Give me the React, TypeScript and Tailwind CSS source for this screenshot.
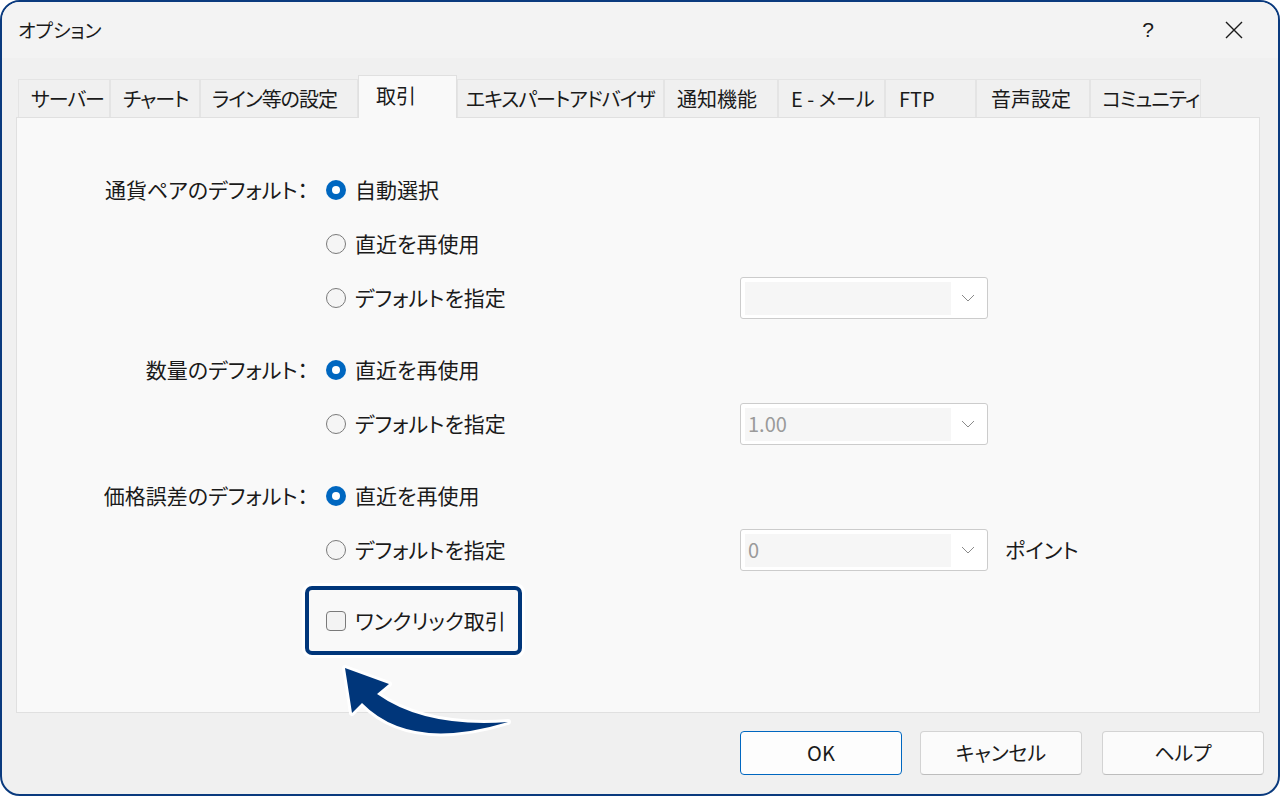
import React from "react";

const font = {
  fontFamily: '"Noto Sans CJK JP", "Noto Sans", sans-serif',
  fontFeatureSettings: '"palt"',
};

const tabs: { label: string; w: number; pl: number; tight?: boolean }[] = [
  { label: "サーバー", w: 92, pl: 12, tight: true },
  { label: "チャート", w: 90, pl: 12, tight: true },
  { label: "ライン等の設定", w: 158, pl: 11, tight: true },
  { label: "取引", w: 99, pl: 17 },
  { label: "エキスパートアドバイザ", w: 207, pl: 8, tight: true },
  { label: "通知機能", w: 114, pl: 12 },
  { label: "E - メール", w: 107, pl: 12 },
  { label: "FTP", w: 91, pl: 13 },
  { label: "音声設定", w: 114, pl: 14 },
  { label: "コミュニティ", w: 111, pl: 11, tight: true },
];

function Radio({ checked }: { checked?: boolean }) {
  if (checked) {
    return (
      <span className="flex h-[20px] w-[20px] shrink-0 items-center justify-center rounded-full bg-[#0067c0]">
        <span className="h-[8px] w-[8px] rounded-full bg-white" />
      </span>
    );
  }
  return <span className="h-[20px] w-[20px] shrink-0 rounded-full border-[1.5px] border-[#7a7a7a] bg-[#f5f5f5]" />;
}

function Dropdown({ value }: { value?: string }) {
  return (
    <div className="flex h-[42px] w-[248px] items-center rounded-[3px] border border-[#cccccc] bg-white pl-[4px] pr-[10px]">
      <div className="flex h-[33px] w-[206px] items-center bg-[#f6f6f6] pl-[3px] text-[20px] text-[#9a9a9a]">
        {value}
      </div>
      <div className="flex flex-1 justify-center pl-[8px]">
        <svg width="14" height="8" viewBox="0 0 14 8">
          <path d="M1 1 L7 7 L13 1" fill="none" stroke="#8a8a8a" strokeWidth="1" />
        </svg>
      </div>
    </div>
  );
}

function Row({
  label,
  checked,
  text,
  dropdown,
  suffix,
}: {
  label?: string;
  checked?: boolean;
  text: string;
  dropdown?: string | null;
  suffix?: string;
}) {
  return (
    <div className="flex h-[54px] items-center">
      <div className="w-[295px] whitespace-nowrap pr-[4px] text-right text-[21px] text-[#1a1a1a]">{label}</div>
      <div className="ml-[14px] flex w-[414px] items-center gap-[9px] text-[21px] text-[#1a1a1a]">
        <Radio checked={checked} />
        <span>{text}</span>
      </div>
      {dropdown !== undefined && dropdown !== null ? <Dropdown value={dropdown} /> : null}
      {suffix ? <span className="ml-[17px] text-[21px] text-[#1a1a1a]">{suffix}</span> : null}
    </div>
  );
}

export default function App() {
  return (
    <div className="h-[796px] w-[1280px] bg-white" style={font}>
      <div className="relative flex h-[796px] w-[1280px] flex-col overflow-hidden rounded-[20px] border-2 border-[#0a3a7e] bg-[#f0f0f0]">
        {/* Title bar */}
        <div className="flex h-[56px] shrink-0 items-center bg-[#f3f3f3] pl-[16px]">
          <span className="text-[19px] text-[#1a1a1a]">オプション</span>
          <span className="ml-auto mr-[70px] text-[21px] text-[#1a1a1a]" style={{ fontFamily: '"Liberation Sans", sans-serif' }}>?</span>
          <svg className="mr-[34px]" width="20" height="20" viewBox="0 0 20 20">
            <path d="M2 2 L18 18 M18 2 L2 18" stroke="#1a1a1a" strokeWidth="1.4" fill="none" />
          </svg>
        </div>

        {/* Tabs */}
        <div className="mt-[17px] flex h-[42px] shrink-0 items-end pl-[16px]">
          {tabs.map((t) =>
            t.label === "取引" ? (
              <div
                key={t.label}
                className="relative z-10 -mb-px flex h-[43px] shrink-0 items-center whitespace-nowrap border border-b-0 border-[#e0e0e0] bg-[#f9f9f9] pb-[3px] text-[20px] text-[#1a1a1a]"
                style={{ width: t.w, paddingLeft: t.pl }}
              >
                {t.label}
              </div>
            ) : (
              <div
                key={t.label}
                className={
                  t.tight
                    ? "flex h-[38px] shrink-0 items-center overflow-hidden whitespace-nowrap border border-b-0 border-[#e4e4e4] bg-[#f0f0f0] text-[20px] tracking-[-1px] text-[#1a1a1a]"
                    : "flex h-[38px] shrink-0 items-center overflow-hidden whitespace-nowrap border border-b-0 border-[#e4e4e4] bg-[#f0f0f0] text-[20px] text-[#1a1a1a]"
                }
                style={{ width: t.w, paddingLeft: t.pl }}
              >
                {t.label}
              </div>
            )
          )}
        </div>

        {/* Panel */}
        <div className="ml-[14px] h-[596px] w-[1244px] shrink-0 border border-[#e0e0e0] bg-[#f9f9f9] pt-[45px]">
          <Row label="通貨ペアのデフォルト：" checked text="自動選択" />
          <Row text="直近を再使用" />
          <Row text="デフォルトを指定" dropdown="" />
          <div className="h-[18px]" />
          <Row label="数量のデフォルト：" checked text="直近を再使用" />
          <Row text="デフォルトを指定" dropdown="1.00" />
          <div className="h-[18px]" />
          <Row label="価格誤差のデフォルト：" checked text="直近を再使用" />
          <Row text="デフォルトを指定" dropdown="0" suffix="ポイント" />
          <div className="h-[17px]" />
          <div className="flex h-[54px] items-center">
            <div className="w-[295px]" />
            <div className="ml-[14px] flex items-center gap-[9px] text-[21px] text-[#1a1a1a]">
              <span className="h-[20px] w-[20px] shrink-0 rounded-[4px] border-[1.5px] border-[#7a7a7a] bg-[#f3f3f3]" />
              <span>ワンクリック取引</span>
            </div>
          </div>
        </div>

        {/* Buttons */}
        <div className="mt-[18px] flex shrink-0 pl-[738px]">
          <button className="flex h-[44px] w-[162px] items-center justify-center rounded-[4px] border-[1.5px] border-[#0067c0] bg-[#fdfdfd] text-[20px] text-[#1a1a1a]">
            OK
          </button>
          <button className="ml-[18px] flex h-[44px] w-[162px] items-center justify-center rounded-[4px] border border-[#d3d3d3] border-b-[#bdbdbd] bg-[#fbfbfb] text-[20px] text-[#1a1a1a]">
            キャンセル
          </button>
          <button className="ml-[20px] flex h-[44px] w-[162px] items-center justify-center rounded-[4px] border border-[#d3d3d3] border-b-[#bdbdbd] bg-[#fbfbfb] text-[20px] text-[#1a1a1a]">
            ヘルプ
          </button>
        </div>

        {/* Highlight box */}
        <div className="absolute left-[300px] top-[581px] rounded-[9px] border-[3px] border-white">
          <div className="h-[69px] w-[217px] rounded-[7px] border-[4px] border-[#00367a]" />
        </div>

        {/* Arrow */}
        <svg className="pointer-events-none absolute left-0 top-0" width="1280" height="796" viewBox="2 2 1280 796">
          <path
            d="M345 668 L389 684 L377 694 Q425 728 508 722 Q410 752 362 703 L352 713 Z"
            fill="#00367a"
            stroke="white"
            strokeWidth="6"
            strokeLinejoin="round"
            paintOrder="stroke"
          />
        </svg>
      </div>
    </div>
  );
}
